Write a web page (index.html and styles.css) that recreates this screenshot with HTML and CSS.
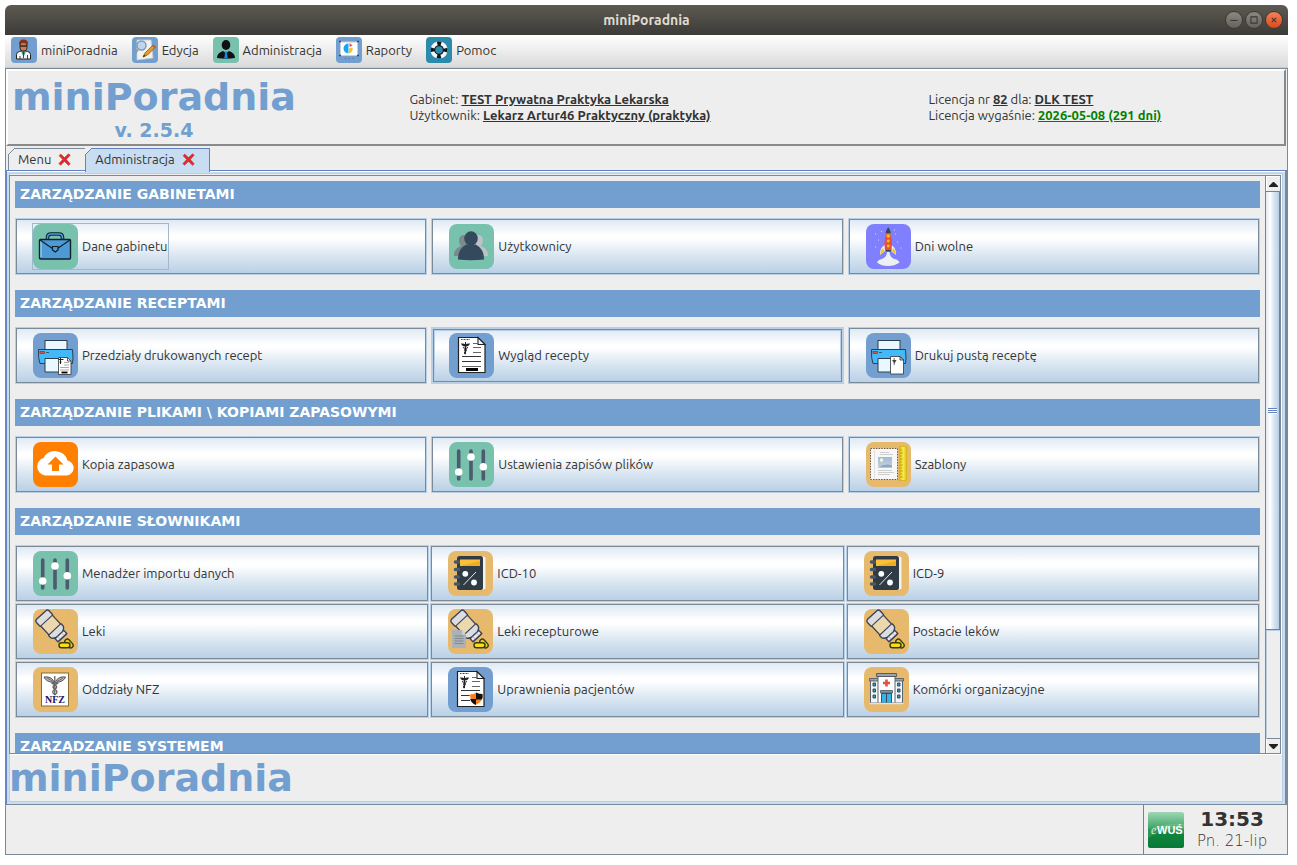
FILE: index.html
```html
<!DOCTYPE html>
<html lang="pl">
<head>
<meta charset="utf-8">
<title>miniPoradnia</title>
<link rel="stylesheet" href="styles.css">
</head>
<body>
<svg class="sprite" aria-hidden="true">
  <defs>
    <linearGradient id="g-green" x1="0" y1="0" x2="0" y2="1"><stop offset="0" stop-color="#9fd6b4"/><stop offset=".45" stop-color="#3fa768"/><stop offset=".5" stop-color="#15883f"/><stop offset="1" stop-color="#067a35"/></linearGradient>
    <linearGradient id="g-sky" x1="0" y1="0" x2="0" y2="1"><stop offset="0" stop-color="#9fb9d6"/><stop offset="1" stop-color="#c6d4dd"/></linearGradient>
    <linearGradient id="g-ruler" x1="0" y1="0" x2="1" y2="0"><stop offset="0" stop-color="#d9bd14"/><stop offset=".5" stop-color="#ffe94e"/><stop offset="1" stop-color="#e0c41c"/></linearGradient>
  </defs>
  <symbol id="i-case" viewBox="0 0 45 45">
    <rect width="45" height="45" rx="8" fill="#78c2ad"/>
    <path d="M14.500 15v-1.500q0-3.500 3.500-3.500h8q3.500 0 3.500 3.500V15" fill="none" stroke="#10202e" stroke-width="3.600"/>
    <path d="M14.500 15v-1.500q0-3.500 3.500-3.500h8q3.500 0 3.500 3.500V15" fill="none" stroke="#4d9ad5" stroke-width="1.600"/>
    <rect x="6.500" y="15.500" width="31" height="19.500" rx="1" fill="#4d9ad5" stroke="#10202e" stroke-width="1.400"/>
    <path d="M8 33V17" stroke="#b6dcf5"/>
    <path d="M7 16l12.500 8.500M37 16l-12.500 8.500" stroke="#10202e" stroke-width="1.200"/>
    <path d="M19.500 22.500h5.500v3.500l-2.700 2-2.800-2z" fill="#4d9ad5" stroke="#10202e" stroke-width="1.200"/>
  </symbol>
  <symbol id="i-users" viewBox="0 0 45 45">
    <rect width="45" height="45" rx="8" fill="#78c2ad"/>
    <path d="M5 31.500c0-5 3-8 7-9.500-3-3.500-3-11 3-11 4 0 6 3 6 6v15H5z" fill="#7b8b8c"/>
    <path d="M39 31.500c0-5-3-8-7-9.500 3-3.500 3-11-3-11-4 0-6 3-6 6v15h16z" fill="#bcc3c8"/>
    <ellipse cx="22" cy="14.500" rx="6.800" ry="7.200" fill="#34495e"/>
    <path d="M9 35.500c0-9 4-12.500 8.500-15h9c4.500 2.500 8.500 6 8.500 15q-13 1.500-26 0z" fill="#34495e"/>
  </symbol>
  <symbol id="i-rocket" viewBox="0 0 45 45">
    <rect width="45" height="45" rx="8" fill="#8080ff"/>
    <path d="M14 31c0-5 1-8 5-10v6zM30 31c0-5-1-8-5-10v6z" fill="#ecf0f1"/>
    <path d="M14 31q0-4 3-7l1 3zM30 31q0-4-3-7l-1 3z" fill="#f1c40f"/>
    <path d="M19 27q-2-14 3.200-21 5.200 7 3.300 21z" fill="#e8503c"/>
    <path d="M19.500 9q1-3.500 2.700-6 1.800 2.500 2.800 6z" fill="#34495e"/>
    <circle cx="22.300" cy="12" r="1.800" fill="#f1c40f"/><circle cx="22.300" cy="17" r="1.400" fill="#f1c40f"/><circle cx="22.300" cy="22" r="1.400" fill="#f1c40f"/>
    <path d="M20 26h5v1.500h-5z" fill="#34495e"/>
    <path d="M21 28h2.500q0 5 4.500 7 4 0 5.500 3.500-5 3.500-11.500 3.500t-11-3.500q1-3 5-3.500 5-2 5-7z" fill="#ecf0f1"/>
    <path d="M9 10h1M15 7.500h1M29 10h1M9 23h1M12 16h1M31 18h1M34.500 24h1M28 6h1" stroke="#d5d8f5"/>
  </symbol>
  <symbol id="i-printer" viewBox="0 0 45 45">
    <rect width="45" height="45" rx="8" fill="#729fcf"/>
    <rect x="12" y="7.500" width="22" height="11" fill="#e9f7fe" stroke="#2c3e50"/>
    <path d="M5.500 16.500h34q1 10 0 14H7q-2-5-1.500-14z" fill="#41b9fb" stroke="#2c3e50"/>
    <rect x="7" y="18.500" width="4.500" height="2" fill="#e8503c" stroke="#7c2b20" stroke-width=".6"/><path d="M13 19.500h3" stroke="#2c3e50" stroke-width=".8"/>
    <path d="M12 25.500h22V39H12z" fill="#e9f7fe" stroke="#2c3e50"/>
  </symbol>
  <symbol id="i-print-rx" viewBox="0 0 45 45">
    <use href="#i-printer"/>
    <path d="M25.500 24.500h9l3.500 3.500v13.500H25.500z" fill="#fff" stroke="#333" stroke-width=".8"/>
    <path d="M25.500 26.500h5M27.500 25v6M26.500 29h2" stroke="#222"/>
    <path d="M31 29.500h5M31 32h5M27 34.500h9M27 37h9" stroke="#888" stroke-width=".7"/>
    <path d="M28.500 39.500h6" stroke="#000" stroke-width="1.800"/>
    <path d="M34.500 24.500V28H38" fill="none" stroke="#333" stroke-width=".8"/>
  </symbol>
  <symbol id="i-print-empty" viewBox="0 0 45 45">
    <use href="#i-printer"/>
    <path d="M24.500 23.500h9.500l3.500 3.500v14H24.500z" fill="#fff" stroke="#333" stroke-width=".8"/>
    <path d="M34 23.500V27h3.500z" fill="#ddd" stroke="#222" stroke-width=".8"/>
    <path d="M26 27h4.500l-2 3.500z" fill="#444"/><path d="M28.200 25v7" stroke="#444" stroke-width=".8"/>
  </symbol>
  <symbol id="i-rx-base" viewBox="0 0 45 45">
    <rect width="45" height="45" rx="8" fill="#729fcf"/>
    <path d="M9.500 4.500h19.500l7 7v28H9.500z" fill="#fff" stroke="#222" stroke-width="1.200"/>
    <path d="M29 4.500v7h7z" fill="#f3f3f3" stroke="#222" stroke-width="1.100"/>
    <path d="M12 6.500h9" stroke="#444" stroke-width="1.200" stroke-dasharray="1 .5"/>
    <path d="M12 10.500q3-.5 4.500 1 1.500-1.500 4.500-1-1 3-4 3h-1q-3 0-4-3z" fill="#222"/>
    <path d="M16.500 9v12" stroke="#222"/><path d="M14 14.500q5 1.500 2.500 4 -2 1.500 0 2.500M19 14.500q-5 1.500-2.500 4" fill="none" stroke="#222" stroke-width="1.100"/>
    <path d="M24 10.500h5M24 14.500h8M24 19.500h8" stroke="#555" stroke-width=".9"/>
    <path d="M13 23.500h19M13 28.500h19" stroke="#333"/>
  </symbol>
  <symbol id="i-rx" viewBox="0 0 45 45">
    <use href="#i-rx-base"/>
    <path d="M13 33.500h19" stroke="#666" stroke-width="1"/><path d="M17 36.500h12" stroke="#000" stroke-width="3"/>
  </symbol>
  <symbol id="i-rights" viewBox="0 0 45 45">
    <use href="#i-rx-base"/>
    <path d="M13 33.500h9" stroke="#333"/>
    <path d="M22 27q4 0 6-1.500 3 1.500 6.500 1.500 1 8-6.500 11-7-3-6-11z" fill="#ff7f1e" stroke="#fff" stroke-width=".5"/>
    <path d="M28 25.500q3 1.500 6.500 1.500.5 3-.5 5.500h-6zM22.300 32H28v6q-5-2-5.700-6z" fill="#111"/>
  </symbol>
  <symbol id="i-cloud" viewBox="0 0 45 45">
    <rect width="45" height="45" rx="8" fill="#ff7f00"/>
    <path d="M12 33.500a9 9 0 0 1-1.500-17.500A13 13 0 0 1 34.500 18.500 7.600 7.600 0 0 1 34 33.500z" fill="#fff"/>
    <path d="M22.500 14.500l8 8h-4.500v6.500h-7v-6.500h-4.500z" fill="#ff7f00"/>
  </symbol>
  <symbol id="i-sliders" viewBox="0 0 45 45">
    <rect width="45" height="45" rx="8" fill="#78c2ad"/>
    <path d="M9.700 9v28M22 9v28M34.300 9v28" stroke="#4c5b70" stroke-width="3.600" stroke-linecap="round"/>
    <circle cx="9.700" cy="30" r="3.800" fill="#fff"/><circle cx="22" cy="15" r="3.800" fill="#fff"/><circle cx="34.300" cy="24.700" r="3.800" fill="#fff"/>
  </symbol>
  <symbol id="i-template" viewBox="0 0 45 45">
    <rect width="45" height="45" rx="8" fill="#e7b96c"/>
    <rect x="4.500" y="6.500" width="27" height="31" fill="#f7f7f7" stroke="#6c5c45" stroke-dasharray="1.500 1.200"/>
    <path d="M8.500 8v28" stroke="#d9d9d9" stroke-width=".8"/>
    <path d="M14 10.500h9M14 12.500h13M12 28.500h14M12 30.500h16M12 32.500h12" stroke="#c9c9c9" stroke-width=".9"/>
    <rect x="12" y="15" width="14" height="10.500" fill="url(#g-sky)"/><circle cx="15.500" cy="18" r="1.800" fill="#f8f5dd"/><path d="M12 25.500q7-5 14-2v2z" fill="#8ea7bf"/>
    <rect x="33.500" y="4.500" width="7" height="34" fill="url(#g-ruler)" stroke="#d3b41b" stroke-width=".8"/>
    <path d="M34 8h2M34 11h3M34 14h2M34 17h3M34 20h2M34 23h3M34 26h2M34 29h3M34 32h2M34 35h3" stroke="#b39300" stroke-width=".7"/>
  </symbol>
  <symbol id="i-icd" viewBox="0 0 45 45">
    <rect width="45" height="45" rx="8" fill="#e7b96c"/>
    <rect x="14" y="5.500" width="23.500" height="33" rx="2" fill="#f5f2ec"/>
    <rect x="9" y="5" width="26" height="34" rx="2.500" fill="#2f3c46"/>
    <path d="M7.500 11h3M7.500 18.500h3M7.500 26h3M7.500 33h3" stroke="#4a5866" stroke-width="3.600" stroke-linecap="round"/>
    <rect x="12" y="8.500" width="20" height="6.500" fill="#fbc038"/><path d="M12 15l20-5v5z" fill="#f0ab25"/>
    <circle cx="17.300" cy="22.800" r="2.900" fill="#fff"/><circle cx="26" cy="31.500" r="2.900" fill="#fff"/>
    <path d="M15.500 34L28 21" stroke="#e8eaec" stroke-width="1"/>
  </symbol>
  <symbol id="i-meds" viewBox="0 0 45 45">
    <rect width="45" height="45" rx="8" fill="#e7b96c"/>
    <g transform="translate(18.500 17) rotate(-43) scale(.86) translate(-20 -19)">
      <path d="M13 1.500h14q3 0 3 3v5.500l-1 1.500v12l1 1.500v3q-1 3-4 4v5.500H14V32q-3-1-4-4v-3l1-1.500v-12L10 10V4.500q0-3 3-3z" fill="#dcdde1" stroke="#3a4354" stroke-width="1.600"/>
      <path d="M10.800 10.500h18.400v14H10.800z" fill="#ecd8ae" stroke="#3a4354" stroke-width="1.300"/>
      <path d="M13 32.500h14v5H13z" fill="#e8e9ec" stroke="#3a4354" stroke-width="1.600"/>
      <path d="M17 33v3.500M23 33v3.500" stroke="#a5abb5"/>
    </g>
    <rect x="-5" y="-2.500" width="10" height="5" rx="2.500" fill="#e7cf12" stroke="#3d3a12" stroke-width="1.300" transform="translate(36 34.500) rotate(48)"/>
    <rect x="26" y="33.700" width="11" height="5" rx="2.500" fill="#f5df17" stroke="#3d3a12" stroke-width="1.400"/>
  </symbol>
  <symbol id="i-meds-doc" viewBox="0 0 45 45">
    <use href="#i-meds"/>
    <path d="M4 21h10l4 4.500V39H4z" fill="#aab2b5"/><path d="M14 21v4.500h4z" fill="#d0d5d6"/>
    <path d="M6.500 27h9M6.500 29.500h9M6.500 32h9M6.500 34.500h9" stroke="#7f8a8e"/>
  </symbol>
  <symbol id="i-hospital" viewBox="0 0 45 45">
    <rect width="45" height="45" rx="8" fill="#e7b96c"/>
    <path d="M6.500 13.500h32V36h-32z" fill="#f3f4f5" stroke="#5a6470"/>
    <path d="M5.500 11.500h10v2.500h-10zM29.500 11.500h10v2.500h-10z" fill="#99a3ad" stroke="#4a545f" stroke-width=".8"/>
    <path d="M14 9h17v27H14z" fill="#fff" stroke="#5a6470"/><path d="M12.500 6.500h20V9.500h-20z" fill="#99a3ad" stroke="#4a545f" stroke-width=".9"/>
    <path d="M22.500 12.500v7M19 16h7" stroke="#e2503e" stroke-width="2.600"/>
    <path d="M16.500 23.500h12v2.500h-12z" fill="#8a949e" stroke="#4a545f" stroke-width=".8"/>
    <path d="M17.500 26.500h10V36h-10z" fill="#34b4e8" stroke="#34424d" stroke-width=".9"/><path d="M22.500 26.500V36" stroke="#34424d" stroke-width=".9"/>
    <g fill="#2c9fc9" stroke="#34424d" stroke-width=".9"><path d="M9 16h2.500v3H9zM9 22h2.500v3H9zM9 28h2.500v3H9zM33.500 16H36v3h-2.500zM33.500 22H36v3h-2.500zM33.500 28H36v3h-2.500z"/></g>
    <path d="M5.500 36.500h34" stroke="#dfe3e6" stroke-width="1.600"/>
  </symbol>
  <symbol id="m-doctor" viewBox="0 0 26 26">
    <rect width="26" height="26" rx="4" fill="#729fcf"/>
    <path d="M5.500 22v-4.500q0-2.500 3-3l4-1 4 1q3 .5 3 3V22z" fill="#f5f5f5" stroke="#222"/>
    <path d="M10 14h5l-2.500 6z" fill="#3b8f84"/><path d="M12.500 15v6M9 19v3M16.500 18v4" stroke="#333" stroke-width=".9"/>
    <rect x="9" y="5" width="7" height="9" rx="3" fill="#c77e55" stroke="#241812" stroke-width=".8"/>
    <path d="M8 8q-.5-5.500 4.500-5.500T17 8q-2-2-4.500-2T8 8z" fill="#8d2f12"/><path d="M9 9h7" stroke="#221815" stroke-width="1.300"/>
  </symbol>
  <symbol id="m-edit" viewBox="0 0 26 26">
    <rect width="26" height="26" rx="4" fill="#729fcf"/>
    <path d="M5 3h14l2 18-16 2z" fill="#f1f1ee" stroke="#c8ccd0" stroke-width=".8"/>
    <circle cx="9.500" cy="8.500" r="4.500" fill="#bcd6ee" stroke="#8698ab" stroke-width="1.400"/><path d="M6 12.500l-3 4" stroke="#8698ab" stroke-width="2"/>
    <path d="M11 20l2-4 8-8 2.500 2-8 8z" fill="#e59c2c" stroke="#875916" stroke-width=".8"/><path d="M11 20l1-2.200 1.500 1.200z" fill="#222"/><path d="M20.500 8.500l2.500 2" stroke="#cc4d31" stroke-width="1.500"/>
  </symbol>
  <symbol id="m-admin" viewBox="0 0 26 26">
    <rect width="26" height="26" rx="4" fill="#78c2ad"/>
    <ellipse cx="13" cy="8" rx="4.300" ry="5" fill="#0e1216"/>
    <path d="M4 21q0-5 6-7l3 2 3-2q6 2 6 7-9 1.500-18 0z" fill="#0e1216"/>
    <path d="M11.500 14.500h3l-.5 2 .8 5h-3.600l.8-5z" fill="#1587e0"/>
  </symbol>
  <symbol id="m-report" viewBox="0 0 26 26">
    <rect width="26" height="26" rx="4" fill="#729fcf"/>
    <rect x="4.500" y="5" width="17" height="13.500" fill="#fff" stroke="#c9d2da"/><path d="M3 4.500h2M21 4.500h2M3 18.500h2M21 18.500h2" stroke="#3c4a58" stroke-width="1.500"/>
    <path d="M12.500 6.500a5 5 0 0 0 0 10z" fill="#1ba5f0"/><path d="M13 11.500v5a5 5 0 0 0 3.500-6z" fill="#f5c51c"/><path d="M13.500 6v4l3-1.500z" fill="#ee4c4c"/>
    <path d="M9 21.500h1M12.500 21.500h1M16.500 21.500h1" stroke="#5b6c7e"/>
  </symbol>
  <symbol id="m-help" viewBox="0 0 26 26">
    <rect width="26" height="26" rx="4" fill="#2c8bab"/>
    <circle cx="13" cy="13" r="6" fill="none" stroke="#0e1820" stroke-width="4.400"/>
    <circle cx="13" cy="13" r="6.800" fill="none" stroke="#f4f6f7" stroke-width="3.600" stroke-dasharray="6.680 4" stroke-dashoffset="-2"/>
  </symbol>
  <symbol id="i-close" viewBox="0 0 12 12">
    <path d="M1 2.500L2.500 1 6 4.200 9.700.8 11.300 2 7.700 6l3.600 4-1.500 1.500L6 7.800 2.300 11.300.8 9.800 4.300 6z" fill="#dd2c2c" stroke="#b32020" stroke-width=".4"/>
  </symbol>
</svg>

<div class="window">
  <header class="titlebar">
    <span class="titlebar-text">miniPoradnia</span>
    <div class="window-controls">
      <button class="wc" aria-label="Minimalizuj"><svg viewBox="0 0 18 18"><path d="M5 9.500h8"/></svg></button>
      <button class="wc" aria-label="Maksymalizuj"><svg viewBox="0 0 18 18"><path d="M5.500 5.500h7v7h-7z"/></svg></button>
      <button class="wc wc-close" aria-label="Zamknij"><svg viewBox="0 0 18 18"><path d="M6.500 6.500l5 5M11.500 6.500l-5 5"/></svg></button>
    </div>
  </header>

  <nav class="menubar">
    <button class="menu-item"><svg><use href="#m-doctor"/></svg>miniPoradnia</button>
    <button class="menu-item"><svg><use href="#m-edit"/></svg>Edycja</button>
    <button class="menu-item"><svg><use href="#m-admin"/></svg>Administracja</button>
    <button class="menu-item"><svg><use href="#m-report"/></svg>Raporty</button>
    <button class="menu-item"><svg><use href="#m-help"/></svg>Pomoc</button>
  </nav>

  <div class="client">
    <section class="banner">
      <div class="brand"><h1 class="logo">miniPoradnia</h1><p class="version">v. 2.5.4</p></div>
      <div class="info"><p>Gabinet: <b>TEST Prywatna Praktyka Lekarska</b></p><p>Użytkownik: <b>Lekarz Artur46 Praktyczny (praktyka)</b></p></div>
      <div class="info"><p>Licencja nr <b>82</b> dla: <b>DLK TEST</b></p><p>Licencja wygaśnie: <b class="valid">2026-05-08 (291 dni)</b></p></div>
    </section>

    <div class="tabs">
      <div class="tab"><button class="tab-name">Menu</button><button class="tab-close" aria-label="Zamknij Menu"><svg><use href="#i-close"/></svg></button></div>
      <div class="tab tab-active"><button class="tab-name">Administracja</button><button class="tab-close" aria-label="Zamknij Administracja"><svg><use href="#i-close"/></svg></button></div>
    </div>

    <main class="pane">
      <div class="scrollpane">
        <div class="viewport">
          <h2 class="section">ZARZĄDZANIE GABINETAMI</h2>
          <div class="grid">
            <button class="tile"><span class="tile-body focused"><svg><use href="#i-case"/></svg>Dane gabinetu</span></button>
            <button class="tile"><span class="tile-body"><svg><use href="#i-users"/></svg>Użytkownicy</span></button>
            <button class="tile"><span class="tile-body"><svg><use href="#i-rocket"/></svg>Dni wolne</span></button>
          </div>
          <h2 class="section">ZARZĄDZANIE RECEPTAMI</h2>
          <div class="grid">
            <button class="tile"><span class="tile-body"><svg><use href="#i-print-rx"/></svg>Przedziały drukowanych recept</span></button>
            <button class="tile tile-hover"><span class="tile-body"><svg><use href="#i-rx"/></svg>Wygląd recepty</span></button>
            <button class="tile"><span class="tile-body"><svg><use href="#i-print-empty"/></svg>Drukuj pustą receptę</span></button>
          </div>
          <h2 class="section">ZARZĄDZANIE PLIKAMI \ KOPIAMI ZAPASOWYMI</h2>
          <div class="grid">
            <button class="tile"><span class="tile-body"><svg><use href="#i-cloud"/></svg>Kopia zapasowa</span></button>
            <button class="tile"><span class="tile-body"><svg><use href="#i-sliders"/></svg>Ustawienia zapisów plików</span></button>
            <button class="tile"><span class="tile-body"><svg><use href="#i-template"/></svg>Szablony</span></button>
          </div>
          <h2 class="section">ZARZĄDZANIE SŁOWNIKAMI</h2>
          <div class="grid grid-dense">
            <button class="tile"><span class="tile-body"><svg><use href="#i-sliders"/></svg>Menadżer importu danych</span></button>
            <button class="tile"><span class="tile-body"><svg><use href="#i-icd"/></svg>ICD-10</span></button>
            <button class="tile"><span class="tile-body"><svg><use href="#i-icd"/></svg>ICD-9</span></button>
            <button class="tile"><span class="tile-body"><svg><use href="#i-meds"/></svg>Leki</span></button>
            <button class="tile"><span class="tile-body"><svg><use href="#i-meds-doc"/></svg>Leki recepturowe</span></button>
            <button class="tile"><span class="tile-body"><svg><use href="#i-meds"/></svg>Postacie leków</span></button>
            <button class="tile"><span class="tile-body"><svg viewBox="0 0 45 45">
              <rect width="45" height="45" rx="8" fill="#e7b96c"/>
              <rect x="8.500" y="6" width="27" height="33" fill="#fff" stroke="#8a6a33"/>
              <path d="M21.800 9v19" stroke="#555" stroke-width="1.200"/>
              <path d="M21 14.500q-3-5.500-10-4.500 2 5 10 5.500zM22.600 14.500q3-5.500 10-4.500-2 5-10 5.500z" fill="#bbb" stroke="#444" stroke-width=".9"/>
              <path d="M14 11l6 3.500M30 11l-6 3.500" stroke="#555" stroke-width=".8"/>
              <path d="M18.500 16q8 3 3.500 6t0 6M25.200 16q-8 3-3.500 6t0 6" fill="none" stroke="#666" stroke-width="1.400"/>
              <text x="22" y="36" class="nfz-text" text-anchor="middle">NFZ</text>
            </svg>Oddziały NFZ</span></button>
            <button class="tile"><span class="tile-body"><svg><use href="#i-rights"/></svg>Uprawnienia pacjentów</span></button>
            <button class="tile"><span class="tile-body"><svg><use href="#i-hospital"/></svg>Komórki organizacyjne</span></button>
          </div>
          <h2 class="section">ZARZĄDZANIE SYSTEMEM</h2>
        </div>
        <div class="scrollbar">
          <button class="arrow" aria-label="W górę"><svg viewBox="0 0 9 5"><path d="M4 0h1l4 4v1H0V4z"/></svg></button>
          <div class="thumb"><span class="grip"></span></div>
          <div class="track"></div>
          <button class="arrow arrow-down" aria-label="W dół"><svg viewBox="0 0 9 5"><path d="M0 0h9v1L5 5H4L0 1z"/></svg></button>
        </div>
      </div>
      <p class="logo pane-logo">miniPoradnia</p>
    </main>

    <footer class="statusbar">
      <div class="status-box">
        <svg class="ewus" viewBox="0 0 36 36" role="img" aria-label="eWUŚ">
          <rect width="36" height="36" rx="2" fill="url(#g-green)"/><path d="M0 18q18-8 36-6v10Q16 16 0 26z" fill="#fff" opacity=".12"/>
          <text x="3" y="22" class="ewus-e">e</text><text x="9" y="22" class="ewus-text">WUŚ</text>
        </svg>
        <div class="clock"><strong>13:53</strong><span>Pn. 21-lip</span></div>
      </div>
    </footer>
  </div>
</div>
</body>
</html>
```
FILE: styles.css
```css
* { box-sizing: border-box; }
body {
  margin: 0;
  padding: 5px 9px 10px 5px;
  background: #fff;
  color: #333;
  font: 13px/16px "Ubuntu", "Noto Sans", sans-serif;
}
h1, h2, p { margin: 0; }
button { margin: 0; padding: 0; border: 0; background: none; color: inherit; font: inherit; }
.sprite { position: absolute; width: 0; height: 0; }

.window { display: flex; flex-direction: column; height: calc(100vh - 15px); min-height: 400px; }

.titlebar {
  position: relative;
  display: flex;
  align-items: center;
  justify-content: center;
  flex: none;
  height: 30px;
  border-radius: 6px 6px 0 0;
  background: linear-gradient(#5d5a52, #3c3b37);
  color: #dfdbd2;
  font: bold 14px/16px "Ubuntu", "Noto Sans", sans-serif;
}
.window-controls { position: absolute; right: 5px; top: 6px; display: flex; gap: 2px; }
.wc { width: 18px; height: 18px; border: 1px solid #3a3935; border-radius: 50%; background: linear-gradient(#8a8880, #64625b); }
.wc svg { display: block; width: 16px; height: 16px; fill: none; stroke: #3a3935; stroke-width: 1.2; }
.wc-close { background: linear-gradient(#f5805a, #dc4a1c); }

.menubar {
  display: flex;
  flex: none;
  gap: 14px;
  height: 33px;
  padding: 2px 6px;
  background: linear-gradient(#fff, #dadada);
  border-bottom: 1px solid #ccc;
}
.menu-item { display: flex; align-items: center; gap: 4px; height: 26px; }
.menu-item svg { width: 26px; height: 26px; }

.client {
  display: flex;
  flex-direction: column;
  flex: 1;
  min-height: 0;
  border: 1px solid #7a8a99;
  background: #eee;
}

.banner {
  display: grid;
  grid-template-columns: 399fr 521fr 357fr;
  align-items: center;
  flex: none;
  height: 77px;
  margin-right: 1px;
  padding: 0 0 2px 4px;
  border: 2px solid;
  border-color: #fff #8a8a8a #8a8a8a #fff;
}
.brand { justify-self: start; text-align: center; }
.logo { color: #729fcf; font: bold 38px/46px "DejaVu Sans", sans-serif; }
.version { color: #729fcf; font: bold 19px/20px "DejaVu Sans", sans-serif; }
.info b { text-decoration: underline; }
.valid { color: #008000; }

.tabs { display: flex; flex: none; padding: 2px 2px 0; }
.tab {
  position: relative;
  display: flex;
  align-items: center;
  gap: 7px;
  height: 22px;
  padding: 0 14px 1px 9px;
  border: solid #7a8a99;
  border-width: 1px 1px 0 1px;
}
.tab + .tab { margin-left: -1px; }
.tab::before {
  content: "";
  position: absolute;
  left: -1px;
  top: -1px;
  width: 7px;
  height: 7px;
  background: linear-gradient(135deg, #eee 44%, #7a8a99 45% 55%, transparent 56%);
}
.tab-active { height: 24px; margin-bottom: -2px; padding-bottom: 3px; z-index: 1; border-color: #6382bf; background: #c8ddf2; }
.tab-active::before { background: linear-gradient(135deg, #eee 44%, #6382bf 45% 55%, transparent 56%); }
.tab-close svg { display: block; width: 13px; height: 13px; }

.pane {
  display: flex;
  flex-direction: column;
  flex: 1;
  min-height: 0;
  border: solid;
  border-width: 1px 2px 1px 1px;
  border-color: #6382bf #7a8a99 #7a8a99 #6382bf;
  box-shadow: inset 0 1px #fff, inset 0 0 0 2px #c8ddf2, inset 0 0 0 3px #b8cfe5;
  padding: 4px 3px 3px 2px;
}
.scrollpane {
  display: flex;
  flex: 1;
  min-height: 0;
  margin-right: 1px;
  border: 1px solid #7a8a99;
  box-shadow: 1px 1px #fff;
}
.viewport { flex: 1; min-width: 0; overflow: hidden; padding: 5px 5px 0; }
.section {
  height: 27px;
  margin-bottom: 10px;
  padding-left: 5px;
  background: #729fcf;
  color: #fff;
  font: bold 14px/26px "DejaVu Sans", sans-serif;
}
.grid { display: grid; grid-template-columns: repeat(3, 1fr); gap: 4px; margin-bottom: 15px; }
.grid-dense { gap: 1px; }
.tile {
  display: flex;
  align-items: center;
  height: 57px;
  padding-left: 16px;
  border: 1px solid #b8cfe5;
  box-shadow: inset 0 0 0 1px #7a8a99;
  background: linear-gradient(#dde8f3, #fff 30%, #fff 35%, #dbe7f2 65%, #b8cfe5);
  line-height: 15px;
}
.tile-hover { border-width: 2px; padding-left: 15px; box-shadow: inset 0 0 0 1px #7a8a99, inset 0 0 0 2px #b8cfe5; }
.tile-body { display: flex; align-items: center; gap: 4px; height: 47px; border: 1px solid transparent; }
.tile-body svg { flex: none; width: 45px; height: 45px; }
.focused { border-color: #a3b8cc; }
.nfz-text { font: bold 10px "Liberation Serif", serif; fill: #1b1464; }

.scrollbar { display: flex; flex-direction: column; width: 15px; border-left: 1px solid #7a8a99; }
.arrow { display: flex; align-items: center; justify-content: center; flex: none; height: 15px; background: #eee; border: solid #fff; border-width: 1px 0 0 1px; }
.arrow svg { width: 9px; height: 5px; fill: #222; }
.arrow-down { border-top-color: #7a8a99; }
.thumb {
  display: flex;
  align-items: center;
  justify-content: center;
  flex: 439;
  margin-left: -1px;
  border: 1px solid #6382bf;
  background: linear-gradient(90deg, #dde8f3, #fff 30%, #dbe7f2 60%, #b8cfe5);
}
.grip { width: 9px; height: 6px; background: repeating-linear-gradient(#6382bf 0 1px, #fff 1px 2px); }
.track { flex: 108; box-shadow: inset 1px 1px #b8cfe5; }
.pane-logo { padding-top: 1px; }

.statusbar { display: flex; justify-content: flex-end; flex: none; height: 49px; }
.status-box { display: flex; align-items: center; gap: 13px; width: 144px; padding-left: 4px; border-left: 1px solid #6382bf; }
.ewus { flex: none; width: 36px; height: 36px; }
.ewus-e { font: italic 12px "Liberation Serif", serif; fill: #d8f0df; }
.ewus-text { font: bold 11px "Liberation Sans", sans-serif; fill: #fff; }
.clock { display: flex; flex-direction: column; align-items: center; }
.clock strong { font: bold 20px/23px "DejaVu Sans", sans-serif; }
.clock span { font: 200 15px/20px "DejaVu Sans", sans-serif; white-space: nowrap; }
```
